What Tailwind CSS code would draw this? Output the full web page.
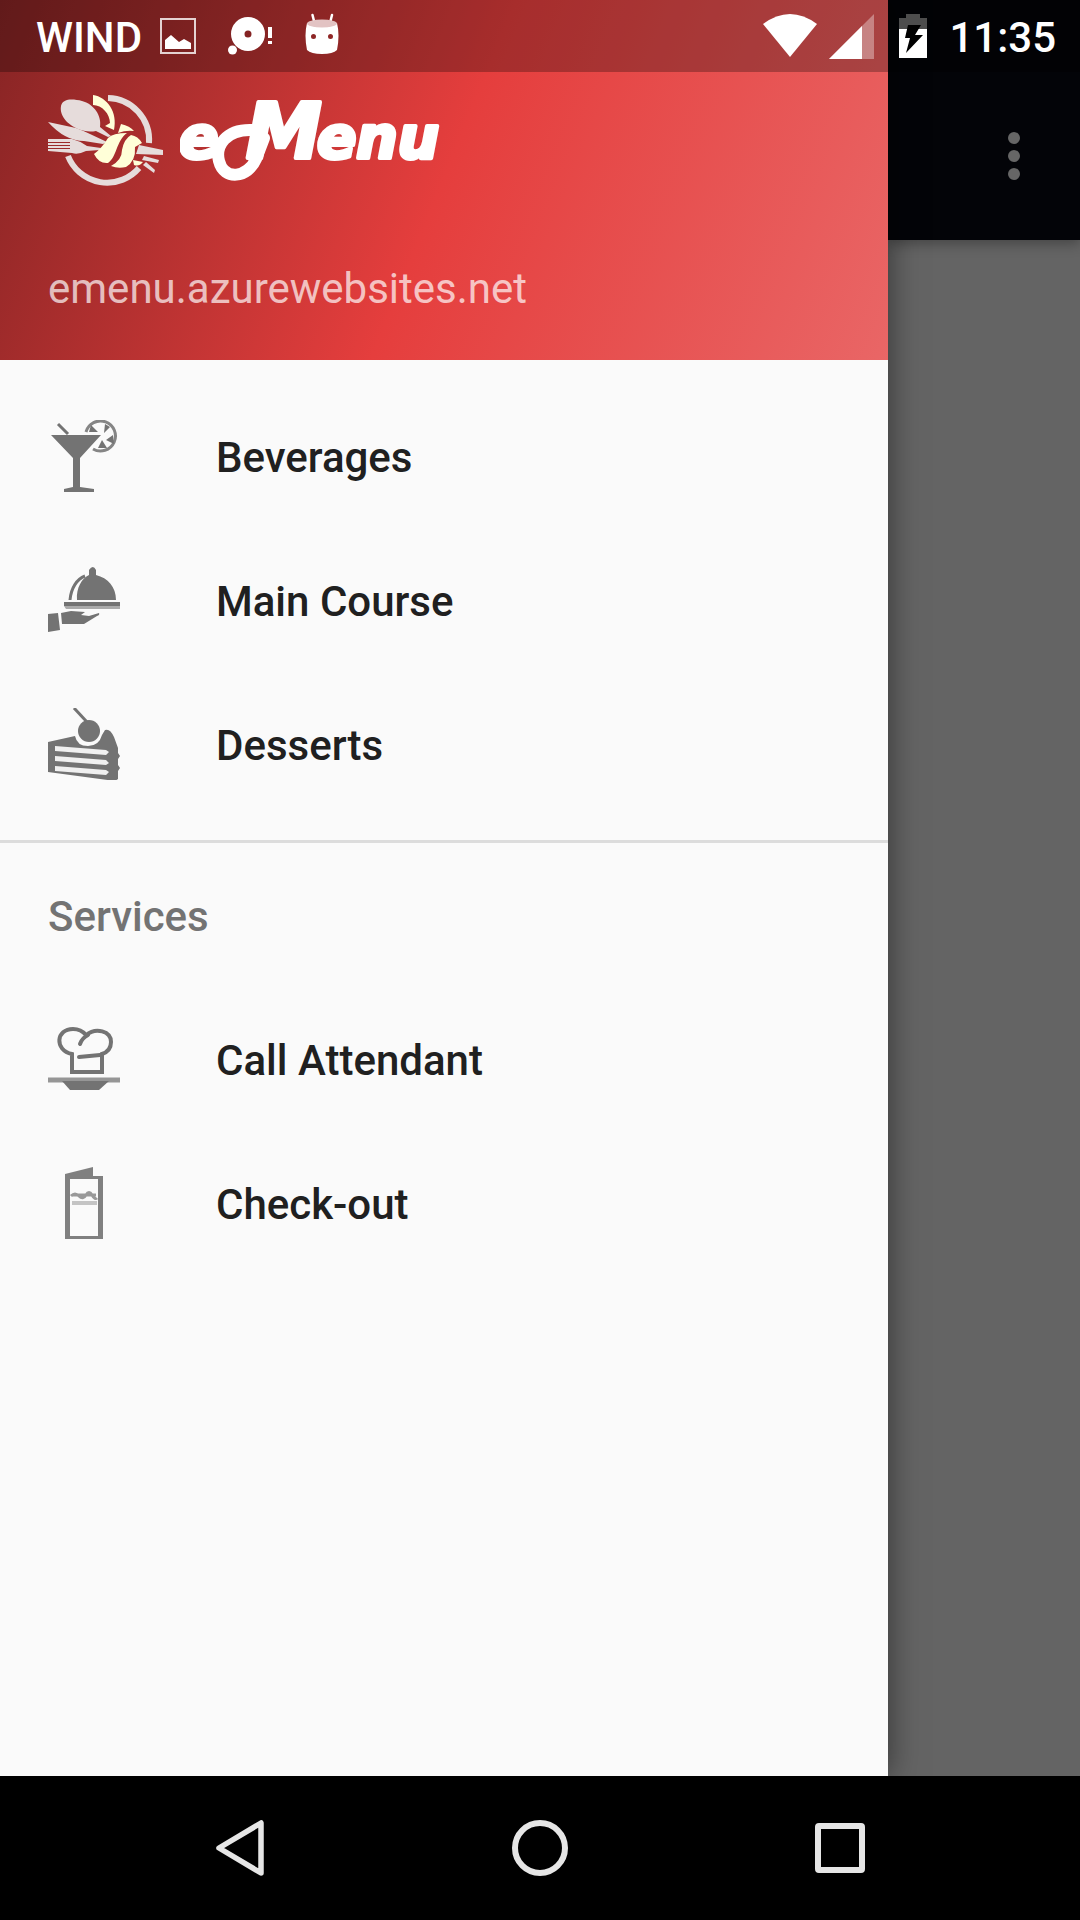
<!DOCTYPE html>
<html lang="en">
<head>
<meta charset="utf-8">
<meta name="viewport" content="width=device-width, initial-scale=1">
<title>eMenu</title>
<script src="https://cdn.jsdelivr.net/npm/@tailwindcss/browser@4"></script>
</head>
<body class="bg-black font-['Roboto',sans-serif] text-[42px] leading-[48px]">
<div class="relative flex min-h-screen flex-col">

  <!-- Status bar, translucent over the drawer header -->
  <header class="absolute inset-x-0 top-0 z-20 flex h-[72px] items-center bg-black/27 pl-9 pr-6 font-medium text-white">
    <span class="pt-1">WIND</span>
    <svg class="ml-[18px] size-9" viewBox="0 0 36 36" aria-label="Screenshot saved"><rect x="1" y="1" width="34" height="34" fill="none" stroke="#fff" stroke-opacity=".8" stroke-width="2"/><path d="M5 22l6-5 8 7 5-3 7 4v6H5z" fill="#fff"/></svg>
    <svg class="ml-8 h-[38px] w-[46px]" viewBox="0 0 46 38" aria-label="Alert"><path fill="#fff" fill-rule="evenodd" d="M20 0a17 17 0 1 1 0 34a17 17 0 1 1 0-34zM20 13.500a3.500 3.500 0 1 0 0 7a3.500 3.500 0 1 0 0-7z"/><circle cx="4.500" cy="33" r="4.500" fill="#fff"/><path fill="#fff" d="M40 10h4v11h-4zM40 24h4v3h-4z"/></svg>
    <svg class="ml-[31px] h-[46px] w-[34px]" viewBox="0 0 34 46" aria-label="Debugging"><path stroke="#fff" stroke-width="2.500" stroke-linecap="round" d="M7.500 2l2 8M27 2l-2 8"/><path fill="#fff" fill-rule="evenodd" d="M2 10Q17 18 32 10Q35 22 32 37Q28 41 17 41T2 37Q-1 22 2 10zM8.500 21a2.500 2.500 0 1 0 0 5a2.500 2.500 0 1 0 0-5zM25.500 21a2.500 2.500 0 1 0 0 5a2.500 2.500 0 1 0 0-5z"/><ellipse cx="17" cy="10.500" rx="15" ry="4" fill="#e2c3c3"/></svg>
    <svg class="ml-auto h-[44px] w-[54px]" viewBox="0 0 54 44" aria-label="Wi-Fi"><path fill="#fff" d="M0 10Q27-10 54 10L27 43z"/></svg>
    <svg class="ml-3 size-[45px]" viewBox="0 0 45 45" aria-label="Signal"><path fill="#fff" fill-opacity=".35" d="M45 0v45H0z"/><path fill="#fff" d="M33 12v33H0z"/></svg>
    <svg class="ml-[25px] h-[44px] w-[28px]" viewBox="0 0 28 44" aria-label="Battery charging"><path fill="#4d4d4d" d="M7 0h14v4h7v12H0V4h7z"/><path fill="#fff" d="M0 15h28v29H0z"/><path fill="#000" d="M9 11h13l-6 10h8L7 39l4-15H6z"/></svg>
    <time class="ml-[22px] pt-1">11:35</time>
  </header>

  <div class="flex flex-1">
    <!-- Navigation drawer -->
    <aside class="relative z-10 w-[82.222%] bg-[#fafafa] shadow-[0_0_30px_rgba(0,0,0,0.5)]">
      <div class="flex h-[360px] flex-col bg-[linear-gradient(112deg,#862424_0%,#e53e3d_50%,#e96666_100%)] px-12 pt-[72px]">
        <div class="flex items-end">
          <svg class="h-[96px] w-[116px] shrink-0" viewBox="0 0 116 96" aria-hidden="true">
            <g fill="none" stroke="#e6dcdb" stroke-width="6"><path d="M60 6A42 42 0 0 1 101 51"/><path d="M20 64A42 42 0 0 0 91 76"/></g>
            <g fill="#e6dcdb"><path d="M13 14C15 6 25 7 34 9C46 12 54 24 52 35L63 44L60 45L48 39C37 41 27 37 19 30C14 25 12 19 13 14z"/><path d="M0 30L28 36Q36 39 42 42L59 50L55 52L36 49Q17 49 0 30z"/><path d="M0 47H24Q32 49 39 54L53 56L52 58L38 59Q30 63 24 61L0 59V57H22V56H0V54H22V53H0V51H22V50H0z"/><path d="M91 53L115 58V63L88 62z"/><path d="M96 64L111 68L110 71L94 68z"/><path d="M98 70L107 78L106 81L95 73z"/></g>
            <g fill="#ffffd8"><path d="M45 3C59 5 70 20 66 38L57 34L62 31C62 22 54 13 45 13z"/><path d="M73 32Q82 34 86 39Q78 38 70 41z"/><path d="M79 41Q65 41 60 46Q54 56 46 62Q51 72 60 71C69 65 68 49 79 41z"/><path d="M83 43Q90 44 94 51L87 55Q88 69 78 75Q70 77 63 74Q74 68 74 58Q76 47 83 43z"/><path d="M85 68L95 70Q91 75 86 73z"/></g>
          </svg>
          <svg class="ml-4 h-[116px] w-[284px]" viewBox="0 -20 284 116" role="img" aria-label="eMenu">
            <path d="M72 38C46 37 35 54 39 69C44 89 68 86 76 67L84 46" fill="none" stroke="#fff" stroke-width="12" stroke-linecap="round"/>
            <g fill="#fff" stroke="#fff" stroke-width="4" stroke-linejoin="round" font-family="DejaVu Sans" font-style="italic" font-weight="700"><text y="66" font-size="58"><tspan x="-1">e</tspan><tspan x="66" font-size="76">M</tspan><tspan x="137">enu</tspan></text></g>
          </svg>
        </div>
        <p class="mt-[77px] text-white/70">emenu.azurewebsites.net</p>
      </div>

      <nav class="font-medium text-[#202020]">
        <ul class="py-6">
          <li><a href="#beverages" class="flex h-36 items-center px-12">
            <svg class="size-[72px]" viewBox="0 0 72 72" fill="#737373"><path d="M3 15h50L32 38v29l14 2v3H16v-3l9-2V38z"/><path d="M10 4l10 10" stroke="#737373" stroke-width="3"/><path d="M38 12a15 15 0 1 1 7 17" fill="none" stroke="#858585" stroke-width="3"/><path d="M43 5l7 7h-9zM57 4l5 3-6 6zM65 15l1 9-8-4zM54 20l5 8h-9z"/></svg>
            <span class="ml-24 pt-1">Beverages</span></a></li>
          <li><a href="#main-course" class="flex h-36 items-center px-12">
            <svg class="size-[72px]" viewBox="0 0 72 72" fill="#737373"><path d="M29 36C28 24 34 14 41 11V6q4-6 7 0v5c12 3 20 12 20 25z"/><path d="M22 36C23 24 29 15 37 12" fill="none" stroke="#737373" stroke-width="3"/><path d="M16 38h56v4H16z"/><path d="M16 42h56v3H18z" fill="#aaa"/><path d="M13 49l10-2 14 1-4 3 8 1 10-3q1 2-2 3L36 60H14zM0 50l10-1 2 17-12 2z"/></svg>
            <span class="ml-24 pt-1">Main Course</span></a></li>
          <li><a href="#desserts" class="flex h-36 items-center px-12">
            <svg class="size-[72px]" viewBox="0 0 72 72" fill="#737373"><path d="M0 34l27-6q2 10 13 10t14-11l3-5q5-2 9 7l4 11v5l2 3-2 3v6l2 3-2 3v8l-3 2L0 64z"/><circle cx="41" cy="23" r="11"/><path d="M26 0l13 14" stroke="#737373" stroke-width="3"/><path d="M7 38l51 4 3 2-3 3-51-4zM7 48l51 4 3 3-3 2-51-4zM7 58l51 4 3 2-3 3-51-4z" fill="#f0f0f0"/></svg>
            <span class="ml-24 pt-1">Desserts</span></a></li>
        </ul>
        <section class="border-t-[3px] border-[#dcdcdc]">
          <h2 class="flex h-36 items-center px-12 pt-1 text-[#737373]">Services</h2>
          <ul>
            <li><a href="#call-attendant" class="flex h-36 items-center px-12">
              <svg class="size-[72px]" viewBox="0 0 72 72" fill="none" stroke="#737373"><path d="M24 49V31C6 27 8 6 25 6q8 0 13 6c10-8 25-4 25 7q0 9-9 12v18z" stroke-width="4"/><path d="M32 21q2-6 8-9M31 34l21-2" stroke-width="4" stroke-linecap="round"/><path d="M0 57h72" stroke-width="5" stroke="#969696"/><path d="M14 58h47l-10 9H22z" fill="#737373" stroke="none"/></svg>
              <span class="ml-24 pt-1">Call Attendant</span></a></li>
            <li><a href="#check-out" class="flex h-36 items-center px-12">
              <svg class="size-[72px]" viewBox="0 0 72 72" fill="none"><path d="M17 7L45 0v9h10v63H17z" fill="#808080"/><path d="M22 12h28v57H22z" fill="#fafafa"/><path d="M23 29q4-4 8 0t7-1 6 0 5 3M24 28h24" stroke="#999" stroke-width="3"/><path d="M24 36h25" stroke="#c4c4c4" stroke-width="4"/></svg>
              <span class="ml-24 pt-1">Check-out</span></a></li>
          </ul>
        </section>
      </nav>
    </aside>

    <!-- Dimmed page behind the drawer -->
    <main class="flex-1 bg-[#646464]">
      <div class="flex h-60 items-center justify-end bg-[#030408] pt-[72px] pr-[60px] shadow-[0_4px_12px_rgba(0,0,0,0.3)]">
        <button aria-label="More options"><svg class="h-12 w-3" viewBox="0 0 12 48" fill="#666"><circle cx="6" cy="6" r="6"/><circle cx="6" cy="24" r="6"/><circle cx="6" cy="42" r="6"/></svg></button>
      </div>
    </main>
  </div>

  <!-- System navigation -->
  <footer class="relative z-20 flex h-36 bg-black px-[90px]">
    <button class="flex flex-1 items-center justify-center" aria-label="Back"><svg class="size-[60px]" viewBox="0 0 60 60" fill="none" stroke="#e6e6e6" stroke-width="5.500" stroke-linejoin="round"><path d="M51 5v50L9 30z"/></svg></button>
    <button class="flex flex-1 items-center justify-center" aria-label="Home"><svg class="size-[60px]" viewBox="0 0 60 60" fill="none" stroke="#e6e6e6" stroke-width="6"><circle cx="30" cy="30" r="25"/></svg></button>
    <button class="flex flex-1 items-center justify-center" aria-label="Recent apps"><svg class="size-[60px]" viewBox="0 0 60 60" fill="none" stroke="#e6e6e6" stroke-width="6"><rect x="8" y="8" width="44" height="44" rx="1"/></svg></button>
  </footer>
</div>
</body>
</html>
